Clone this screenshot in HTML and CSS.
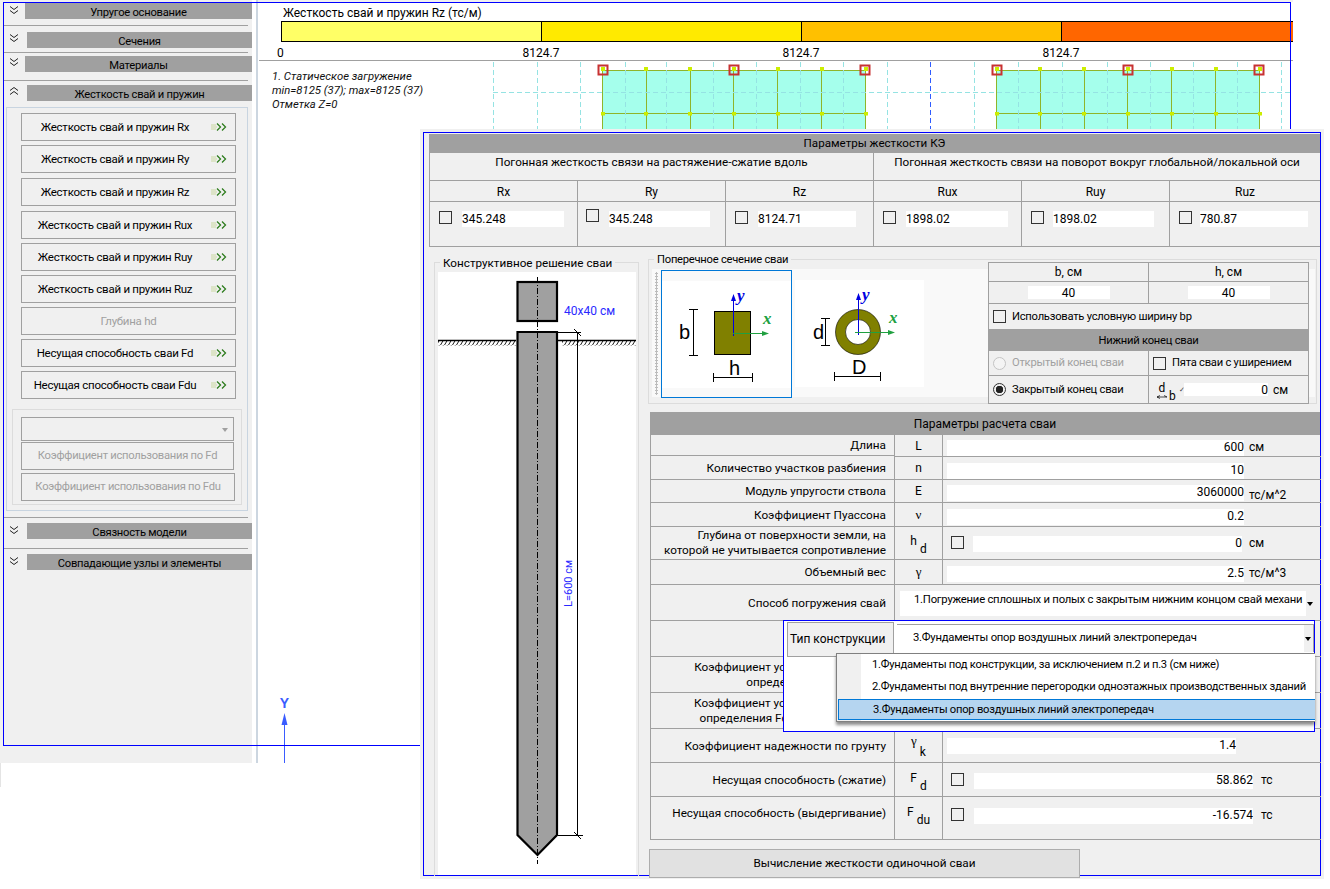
FILE: index.html
```html
<!DOCTYPE html>
<html lang="ru">
<head>
<meta charset="utf-8">
<title>Жесткость свай и пружин</title>
<link rel="stylesheet" href="styles.css">
</head>
<body>
<div class="stage">

  <svg width="0" height="0" class="defs">
    <defs>
      <symbol id="chev-down" viewBox="0 0 10 10"><path d="M1 1.5 5 4.5 9 1.5M1 5.5 5 8.5 9 5.5" fill="none" stroke="#222" stroke-width="1"/></symbol>
      <symbol id="chev-up" viewBox="0 0 10 10"><path d="M1 4.5 5 1.5 9 4.5M1 8.5 5 5.5 9 8.5" fill="none" stroke="#222" stroke-width="1"/></symbol>
      <symbol id="go" viewBox="0 0 17 8"><path d="M0 2H5M0 4H6M0 6H5" stroke="#c9d8a0" stroke-width="1"/><path d="M6 .5 9.5 4 6 7.5M11 .5 14.5 4 11 7.5" fill="none" stroke="#2f7d1f" stroke-width="1.300"/></symbol>
      <pattern id="hatch" width="4" height="5" patternUnits="userSpaceOnUse"><path d="M3.500 0 .5 5" stroke="#000" stroke-width=".9"/></pattern>
      <g id="slab">
        <rect x="602" y="70" width="264" height="70" fill="#a5ffec"/>
        <path d="M602 70.500H866M602 113.500H866M602.500 70V140M646.500 70V140M690.500 70V140M733.500 70V140M777.500 70V140M821.500 70V140M865.500 70V140" fill="none" stroke="#8fb52a" stroke-width="1"/>
        <path d="M601 67h4v4h-4zM644 67h4v4h-4zM688 67h4v4h-4zM732 67h4v4h-4zM776 67h4v4h-4zM820 67h4v4h-4zM864 67h4v4h-4zM601 112h4v3.500h-4zM644 112h4v3.500h-4zM688 112h4v3.500h-4zM732 112h4v3.500h-4zM776 112h4v3.500h-4zM820 112h4v3.500h-4zM864 112h4v3.500h-4z" fill="#ccee00"/>
        <path d="M598.500 65.500h9v9h-9zM729.500 65.500h9v9h-9zM860.500 65.500h9v9h-9z" fill="none" stroke="#c83232" stroke-width="2"/>
      </g>
    </defs>
  </svg>

  <div class="app">
    <aside class="side">
      <div class="sec sec-a s1"><svg class="chev c1"><use href="#chev-down"/></svg><div class="bar">Упругое основание</div></div>
      <div class="rule r1"></div>
      <div class="sec sec-b s2"><svg class="chev c2"><use href="#chev-down"/></svg><div class="bar">Сечения</div></div>
      <div class="rule r2"></div>
      <div class="sec sec-a s3"><svg class="chev c2"><use href="#chev-down"/></svg><div class="bar">Материалы</div></div>
      <div class="rule r3"></div>
      <div class="sec sec-b s4"><svg class="chev c3"><use href="#chev-up"/></svg><div class="bar">Жесткость свай и пружин</div></div>

      <div class="group">
        <div class="btn"><span class="btn-t">Жесткость свай и пружин Rx</span><svg class="go"><use href="#go"/></svg></div>
        <div class="btn"><span class="btn-t">Жесткость свай и пружин Ry</span><svg class="go"><use href="#go"/></svg></div>
        <div class="btn b5"><span class="btn-t">Жесткость свай и пружин Rz</span><svg class="go"><use href="#go"/></svg></div>
        <div class="btn b5"><span class="btn-t">Жесткость свай и пружин Rux</span><svg class="go"><use href="#go"/></svg></div>
        <div class="btn"><span class="btn-t">Жесткость свай и пружин Ruy</span><svg class="go"><use href="#go"/></svg></div>
        <div class="btn"><span class="btn-t">Жесткость свай и пружин Ruz</span><svg class="go"><use href="#go"/></svg></div>
        <div class="btn off"><span class="btn-t">Глубина hd</span></div>
        <div class="btn"><span class="btn-t">Несущая способность сваи Fd</span><svg class="go"><use href="#go"/></svg></div>
        <div class="btn"><span class="btn-t">Несущая способность сваи Fdu</span><svg class="go"><use href="#go"/></svg></div>
        <div class="subgroup">
          <div class="combo-off"><span class="tri tri-off"></span></div>
          <div class="btn off wide1"><span class="plain">Коэффициент использования по Fd</span></div>
          <div class="btn off wide2"><span class="plain">Коэффициент использования по Fdu</span></div>
        </div>
      </div>

      <div class="rule r4"></div>
      <div class="sec sec-b s5"><svg class="chev c4"><use href="#chev-down"/></svg><div class="bar">Связность модели</div></div>
      <div class="rule r5"></div>
      <div class="sec sec-b s5"><svg class="chev c4"><use href="#chev-down"/></svg><div class="bar">Совпадающие узлы и элементы</div></div>
    </aside>

    <div class="gutter"></div>

    <main class="canvas">
      <div class="legend-title">Жесткость свай и пружин Rz (тс/м)</div>
      <div class="legend">
        <div class="seg seg1"></div><div class="seg seg2"></div><div class="seg seg3"></div><div class="seg seg4"></div>
      </div>
      <div class="ticks">
        <div class="tick"><span>0</span></div>
        <div class="tick"><span>8124.7</span></div>
        <div class="tick"><span>8124.7</span></div>
        <div class="tick"><span>8124.7</span></div>
      </div>
      <svg class="drawing" viewBox="258 0 1035 763">
        <use href="#slab"/>
        <use href="#slab" x="394"/>
        <g stroke="#95e3e3" stroke-width="1" stroke-dasharray="5 3" fill="none">
          <path d="M493.500 62V140M537.500 62V140M580.500 62V140M625.500 62V140M666.500 62V140M713.500 62V140M756.500 62V140M800.500 62V140M843.500 62V140M887.500 62V140M974.500 62V140M1018.500 62V140M1062.500 62V140M1107.500 62V140M1150.500 62V140M1193.500 62V140M1237.500 62V140M1281.500 62V140"/>
          <path d="M493 92.500H1293"/>
        </g>
        <path d="M930.500 62V140" stroke="#2f5cff" stroke-width="1" stroke-dasharray="5 3"/>
        <text x="284.500" y="708" class="axis-y">Y</text>
        <path d="M284.500 713 287.500 725H281.500Z" fill="#3a5cff"/>
        <path d="M284.500 724V763" stroke="#3a5cff" stroke-width="1"/>
      </svg>
      <div class="note">1. Статическое загружение<br>min=8125 (37); max=8125 (37)<br>Отметка Z=0</div>
    </main>
  </div>

  <div class="stub"></div>
  <div class="frame"></div>

  <section class="dialog">
    <div class="gray-bar head-top">Параметры жесткости КЭ</div>

    <div class="stiff">
      <div class="st-cell st-title span3">Погонная жесткость связи на растяжение-сжатие вдоль</div>
      <div class="st-cell st-title span3">Погонная жесткость связи на поворот вокруг глобальной/локальной оси</div>
      <div class="st-cell st-head">Rx</div>
      <div class="st-cell st-head">Ry</div>
      <div class="st-cell st-head">Rz</div>
      <div class="st-cell st-head">Rux</div>
      <div class="st-cell st-head">Ruy</div>
      <div class="st-cell st-head">Ruz</div>
      <div class="st-cell st-val"><span class="check"></span><div class="input w102">345.248</div></div>
      <div class="st-cell st-val pl9"><span class="check up2"></span><div class="input w101">345.248</div></div>
      <div class="st-cell st-val"><span class="check"></span><div class="input w98">8124.71</div></div>
      <div class="st-cell st-val"><span class="check"></span><div class="input w102">1898.02</div></div>
      <div class="st-cell st-val"><span class="check"></span><div class="input w101 gap-less">1898.02</div></div>
      <div class="st-cell st-val"><span class="check"></span><div class="input w108 gap-less2">780.87</div></div>
    </div>

    <div class="mid">
      <div class="g-pile">
        <div class="g-title g-title-pile">Конструктивное решение сваи</div>
        <svg class="pile-svg" viewBox="438 272 198 603">
          <rect x="517.500" y="282" width="39.500" height="39" fill="#a0a0a0" stroke="#000" stroke-width="2.200"/>
          <path d="M517.500 332H557V835L537.500 855 517.500 835Z" fill="#a0a0a0" stroke="#000" stroke-width="2.200"/>
          <path d="M537.500 277V864" stroke="#000" stroke-width="1" stroke-dasharray="6 2 1 2"/>
          <path d="M438 340.500H516M558 340.500H636" stroke="#000" stroke-width="1.500"/>
          <rect x="438" y="341" width="78" height="4.500" fill="url(#hatch)"/>
          <rect x="562" y="341" width="74" height="4.500" fill="url(#hatch)"/>
          <text x="564" y="315" class="pile-lab">40x40 см</text>
          <path d="M558 332.500H581M577.500 332V835M558 835.500H583M574 329 581 336M574 832 581 839" fill="none" stroke="#000" stroke-width="1"/>
          <text transform="translate(572 607) rotate(-90)" class="pile-lab small">L=600 см</text>
        </svg>
      </div>

      <div class="mid-right">
        <div class="g-sect">
          <div class="g-title g-title-sect">Поперечное сечение сваи</div>
          <div class="sect-in">
            <div class="grip"></div>
            <div class="item selected">
              <svg class="sec-svg" viewBox="662 281 129 107">
                <rect x="714.500" y="311.500" width="36" height="43" fill="#808000" stroke="#000" stroke-width="1"/>
                <path d="M733.500 336V298" stroke="#0000e0" stroke-width="1"/>
                <path d="M733.500 294 736 301H731Z" fill="#0000e0"/>
                <path d="M733 333.500H764" stroke="#20a040" stroke-width="1"/>
                <path d="M769 333.500 762 331V336Z" fill="#20a040"/>
                <text x="737" y="301" class="ax ax-y">y</text>
                <text x="763" y="324" class="ax ax-x">x</text>
                <path d="M693.500 309V356M689 309.500H698M689 355.500H698M713 377.500H753M713.500 373V382M752.500 373V382" fill="none" stroke="#000" stroke-width="1"/>
                <text x="679" y="339" class="dim-t">b</text>
                <text x="729" y="375" class="dim-t">h</text>
              </svg>
            </div>
            <div class="item">
              <svg class="sec-svg" viewBox="795 281 129 107">
                <circle cx="858" cy="333" r="17.500" fill="#fff" stroke="#808000" stroke-width="10"/>
                <circle cx="858" cy="333" r="22.500" fill="none" stroke="#000" stroke-width=".6"/>
                <circle cx="858" cy="333" r="12.500" fill="none" stroke="#000" stroke-width=".6"/>
                <path d="M858.500 336V298" stroke="#0000e0" stroke-width="1"/>
                <path d="M858.500 294 861 301H856Z" fill="#0000e0"/>
                <path d="M855 333.500H890" stroke="#20a040" stroke-width="1"/>
                <path d="M895 333.500 888 331V336Z" fill="#20a040"/>
                <text x="862" y="301" class="ax ax-y">y</text>
                <text x="889" y="324" class="ax ax-x">x</text>
                <path d="M825.500 319V347M821 319.500H830M821 346.500H830M834 377.500H881M834.500 373V382M880.500 373V382" fill="none" stroke="#000" stroke-width="1"/>
                <text x="813" y="340" class="dim-t">d</text>
                <text x="852" y="375" class="dim-t">D</text>
              </svg>
            </div>
            <div class="bh">
              <div class="bh-c bh-r1">b, см</div>
              <div class="bh-c bh-r1">h, см</div>
              <div class="bh-c bh-r2"><div class="input w82 tc">40</div></div>
              <div class="bh-c bh-r2"><div class="input w82 tc">40</div></div>
              <div class="bh-c bh-r3 span2 start"><span class="check"></span><span class="sm">Использовать условную ширину bp</span></div>
              <div class="gray-bar bh-band span2">Нижний конец сваи</div>
              <div class="bh-c bh-r4 start disabled"><span class="radio radio-off"></span><span class="sm">Открытый конец сваи</span></div>
              <div class="bh-c bh-r4 start"><span class="check"></span><span class="sm">Пята сваи с уширением</span></div>
              <div class="bh-c bh-r5 start"><span class="radio radio-on"></span><span class="sm">Закрытый конец сваи</span></div>
              <div class="bh-c bh-r5 start tight">
                <span class="frac"><span class="frac-top"><span class="frac-d">d</span><svg class="frac-arrow" viewBox="0 0 10 4"><path d="M0 2H10M0 2 3 .5M0 2 3 3.500M10 2 7 .5" fill="none" stroke="#000" stroke-width=".7"/></svg></span><span class="frac-b">b</span></span>
                <span class="tickmark">✓</span>
                <div class="input w84 tr">0</div><span class="unit">см</span>
              </div>
            </div>
          </div>
        </div>

        <div class="gray-bar head-params">Параметры расчета сваи</div>
        <div class="params">
          <div class="p-label h21">Длина</div><div class="p-sym">L</div>
          <div class="p-val pt5"><div class="input w297 tr">600</div><span class="unit">см</span></div>

          <div class="p-label h23">Количество участков разбиения</div><div class="p-sym">n</div>
          <div class="p-val pt6"><div class="input w297 tr">10</div></div>

          <div class="p-label h23">Модуль упругости ствола</div><div class="p-sym">E</div>
          <div class="p-val pt5"><div class="input w297 tr">3060000</div><span class="unit low">тс/м^2</span></div>

          <div class="p-label h24">Коэффициент Пуассона</div><div class="p-sym greek">ν</div>
          <div class="p-val pt6"><div class="input w297 tr">0.2</div></div>

          <div class="p-label h33 lines">Глубина от поверхности земли, на<br>которой не учитывается сопротивление</div><div class="p-sym"><span class="main">h</span><sub>d</sub></div>
          <div class="p-val pt9 hasbox"><span class="check"></span><div class="input w269 tr">0</div><span class="unit">см</span></div>

          <div class="p-label h25">Объемный вес</div><div class="p-sym greek">γ</div>
          <div class="p-val pt6"><div class="input w297 tr">2.5</div><span class="unit">тс/м^3</span></div>

          <div class="p-label h36">Способ погружения свай</div>
          <div class="p-combo span2"><div class="combo">1.Погружение сплошных и полых с закрытым нижним концом свай механи</div><span class="tri"></span></div>

          <div class="p-label h36"></div><div class="p-blank span2"></div>

          <div class="p-label h36 lines">Коэффициент условий работы при<br>определения Fd (сжатие)</div><div class="p-blank span2"></div>

          <div class="p-label h36 lines">Коэффициент условий работы для<br>определения Fdu (выдергивание)</div><div class="p-blank span2"></div>

          <div class="p-label h34">Коэффициент надежности по грунту</div><div class="p-sym"><span class="main main-k greek">γ</span><sub>k</sub></div>
          <div class="p-val pt9"><div class="input w289 tr">1.4</div></div>

          <div class="p-label h34">Несущая способность (сжатие)</div><div class="p-sym"><span class="main">F</span><sub>d</sub></div>
          <div class="p-val pt11 hasbox fd"><span class="check"></span><div class="input w279 tr">58.862</div><span class="unit wide">тс</span></div>

          <div class="p-label h43 top">Несущая способность (выдергивание)</div><div class="p-sym p-sym-up"><span class="main">F</span><sub>du</sub></div>
          <div class="p-val pt12 hasbox fd"><span class="check"></span><div class="input w279 tr">-16.574</div><span class="unit wide">тс</span></div>
        </div>
        <div class="calc">Вычисление жесткости одиночной сваи</div>
      </div>
    </div>

    <div class="popup">
      <div class="pop-row">
        <div class="pop-label">Тип конструкции</div>
        <div class="pop-combo"><div class="pop-white">3.Фундаменты опор воздушных линий электропередач</div><span class="tri"></span></div>
      </div>
      <div class="menu">
        <div class="menu-item">1.Фундаменты под конструкции, за исключением п.2 и п.3 (см ниже)</div>
        <div class="menu-item">2.Фундаменты под внутренние перегородки одноэтажных производственных зданий</div>
        <div class="menu-item active">3.Фундаменты опор воздушных линий электропередач</div>
      </div>
    </div>
  </section>
</div>
</body>
</html>
```
FILE: styles.css
```css
* { box-sizing: border-box; }
html, body { margin: 0; padding: 0; background: #fff; }
body { font-family: Roboto, "Noto Sans", "Liberation Sans", sans-serif; font-size: 12px; line-height: 14px; color: #000; }
.defs { position: absolute; }
.stage { position: relative; width: 1330px; height: 889px; overflow: hidden; background: #fff; }

/* main window */
.app { position: absolute; left: 0; top: 0; width: 1293px; height: 763px; display: flex; }
.side { width: 252px; height: 763px; background: #f0f0f0; padding-top: 2px; flex: none; }
.gutter { width: 6px; flex: none; background: linear-gradient(90deg, #fff 0 4px, #ccd6e0 4px 6px); }
.canvas { position: relative; flex: 1; border-top: 2px solid #f0f0f0; }
.frame { position: absolute; left: 3px; top: 2px; width: 1288px; height: 744px; border: 1px solid #0000ff; pointer-events: none; }
.stub { position: absolute; left: 0; top: 763px; width: 1px; height: 24px; background: #e4e4e4; }

.sec { position: relative; display: flex; }
.sec-a { padding-left: 25px; }
.sec-b { padding-left: 27px; }
.bar { flex: 1; background: #a0a0a0; text-align: center; height: 16px; line-height: 20px; font-size: 11.200px; letter-spacing: -.25px; }
.s1 .bar { height: 17px; line-height: 21px; }
.s2 { margin-top: 6px; }
.s3 { margin-top: 3px; }
.s4 { margin-top: 4px; }
.s5 { margin-top: 5px; }
.chev { position: absolute; left: 9px; width: 10px; height: 10px; }
.c1 { top: 3px; }
.c2 { top: 1px; }
.c3 { top: 1px; }
.c4 { top: 2px; }
.rule { height: 1px; background: #a0a0a0; margin-left: 4px; width: 244px; }
.r1 { margin-top: 6px; }
.r2 { margin-top: 4px; }
.r3 { margin-top: 8px; }
.r4 { margin-top: 6px; }
.r5 { margin-top: 9px; }

.group { margin: 6px 0 0 6px; width: 242px; height: 404px; border: 1px solid #c8d4e0; padding: 5px 0 0 14px; }
.btn { position: relative; width: 215px; height: 28px; margin-bottom: 4px; border: 1px solid #a0a0a0; background: #f0f0f0; display: flex; align-items: center; justify-content: center; padding: 0 27px 0 0; font-size: 11.500px; letter-spacing: -.26px; }
.b5 { margin-top: 5px; }
.btn-t { white-space: nowrap; }
.go { position: absolute; right: 7px; top: 9px; width: 17px; height: 8px; }
.off { color: #a0a0a0; padding-right: 0; }
.subgroup { margin: 10px 0 0 -9px; width: 230px; height: 96px; border: 1px solid #dcdcdc; padding: 7px 0 0 8px; }
.combo-off { position: relative; width: 213px; height: 24px; border: 1px solid #a0a0a0; margin-bottom: 1px; }
.wide1 { width: 213px; padding: 0; margin-bottom: 3px; font-size: 11.200px; letter-spacing: -.27px; }
.wide2 { width: 214px; padding: 0; margin-bottom: 0; font-size: 11.200px; letter-spacing: -.27px; }
.plain { white-space: nowrap; }
.tri { display: block; width: 0; height: 0; border-left: 3px solid transparent; border-right: 3px solid transparent; border-top: 4px solid #000; }
.tri-off { position: absolute; right: 5px; top: 10px; border-top-color: #a0a0a0; }

/* canvas contents */
.legend-title { margin: 4px 0 0 25px; height: 15px; line-height: 15px; }
.legend { display: flex; margin-left: 23px; width: 1012px; height: 21px; border: 1px solid #000; border-right: 0; margin-top: 0; }
.seg { width: 260px; flex: none; border-right: 1px solid #000; }
.seg1 { background: #ffff66; }
.seg2 { background: #ffea00; }
.seg3 { background: #ffc000; }
.seg4 { background: #ff6600; border-right: 0; flex: 1; }
.ticks { display: flex; margin-left: 1px; padding: 4px 0 0 22px; height: 19px; width: 1034px; border-bottom: 1px solid #a0a0a0; overflow: hidden; }
.tick { width: 260px; flex: none; }
.tick span { display: inline-block; transform: translateX(-50%); white-space: nowrap; }
.tick:first-child span { transform: translateX(-4px); }
.drawing { position: absolute; left: 0; top: -2px; width: 1035px; height: 763px; }
.axis-y { font: bold 14px "Liberation Sans", sans-serif; fill: #3a5cff; text-anchor: middle; }
.note { position: relative; margin: 9px 0 0 14px; font-size: 11.300px; font-style: italic; line-height: 14px; color: #111; }

/* dialog */
.dialog { position: absolute; left: 423px; top: 132px; width: 898px; height: 744px; border: 1px solid #0000ff; background: #f0f0f0; box-shadow: 0 0 0 3px #f0f0f0; padding: 1px 0 0 5px; }
.gray-bar { background: #a0a0a0; text-align: center; }
.head-top { height: 19px; line-height: 19px; font-size: 11.600px; }

.stiff { display: grid; grid-template-columns: repeat(5, 148px) 151px; grid-template-rows: 28px 21px 45px; }
.st-cell { border-left: 1px solid #a0a0a0; border-bottom: 1px solid #a0a0a0; }
.span3 { grid-column: span 3; }
.span2 { grid-column: span 2; }
.st-title { text-align: center; padding-top: 2px; font-size: 11.700px; }
.st-head { text-align: center; line-height: 23px; }
.st-val { display: flex; align-items: flex-start; padding: 9px 0 0 9px; gap: 10px; }
.st-val .input { line-height: 16px; }
.pl9 { padding-left: 8px; }

.check { display: block; flex: none; width: 13px; height: 13px; border: 1px solid #333; }
.up2 { margin-top: -2px; }
.input { background: #fff; height: 16px; line-height: 15px; flex: none; white-space: nowrap; overflow: hidden; }
.tc { text-align: center; }
.tr { text-align: right; }
.w102 { width: 102px; }
.w101 { width: 101px; }
.w98 { width: 98px; }
.w108 { width: 108px; }
.w82 { width: 82px; height: 13px; line-height: 14px; }
.w84 { width: 84px; height: 13px; line-height: 14px; }
.w297 { width: 297px; }
.w289 { width: 289px; }
.w279 { width: 279px; }
.w269 { width: 269px; }
.gap-less { margin-left: -1px; }
.gap-less2 { margin-left: -2px; }

.mid { display: flex; align-items: flex-start; }
.g-pile { position: relative; margin: 15px 0 0 5px; width: 205px; height: 614px; border: 1px solid #dcdcdc; border-bottom: 0; padding: 9px 0 0 3px; flex: none; }
.g-title { position: absolute; top: -7px; background: #f0f0f0; padding: 0 3px; white-space: nowrap; }
.g-title-pile { left: 5px; font-size: 11.700px; }
.g-title-sect { left: 5px; font-size: 11.200px; letter-spacing: -.24px; }
.pile-svg { display: block; width: 198px; height: 603px; background: #fff; }
.pile-lab { font: 12px Roboto, sans-serif; fill: #2a2aff; }
.small { font-size: 11px; }

.mid-right { margin-left: 9px; width: 672px; flex: none; }
.g-sect { position: relative; margin-top: 12px; width: 669px; height: 145px; border: 1px solid #dcdcdc; padding: 9px 0 0 3px; }
.sect-in { display: flex; align-items: flex-start; width: 663px; height: 128px; background: #f9f9f9; }
.grip { width: 9px; flex: none; margin-top: 3px; height: 123px; background: radial-gradient(circle, #bbb 1px, transparent 1.100px) 3px 0 / 3px 3px repeat-y; }
.item { width: 131px; height: 128px; flex: none; padding: 11px 0 0; margin-right: 3px; }
.selected { border: 1px solid #0078d7; padding: 10px 0 0 0; width: 131px; margin-top: 1px; height: 128px; }
.sec-svg { display: block; width: 129px; height: 107px; background: #fff; }
.ax { font-family: "Liberation Serif", serif; font-style: italic; font-weight: bold; font-size: 17px; }
.ax-y { fill: #0000e0; }
.ax-x { fill: #20a040; }
.dim-t { font: 20px "Liberation Sans", sans-serif; fill: #000; }

.bh { margin: -7px 0 0 59px; width: 321px; display: grid; grid-template-columns: 160px 160px; grid-template-rows: 19px 22px 26px 21px 25px 28px; border-top: 1px solid #a0a0a0; border-left: 1px solid #a0a0a0; flex: none; background: #f0f0f0; }
.bh-c { border-right: 1px solid #a0a0a0; border-bottom: 1px solid #a0a0a0; display: flex; align-items: center; justify-content: center; white-space: nowrap; }
.start { justify-content: flex-start; padding-left: 4px; gap: 6px; }
.sm { font-size: 11.200px; letter-spacing: -.24px; }
.disabled { color: #a0a0a0; }
.bh-band { line-height: 21px; border-right: 1px solid #a0a0a0; font-size: 11.200px; letter-spacing: -.24px; }
.radio { display: block; width: 13px; height: 13px; border-radius: 50%; border: 1px solid #333; flex: none; }
.radio-off { border-color: #c4c4c4; background: #f4f4f4; }
.radio-on { background: radial-gradient(circle, #222 0 3.500px, transparent 4px); }
.tight { gap: 0; padding-left: 8px; }
.frac { display: flex; align-items: flex-end; width: 22px; flex: none; font-size: 12px; line-height: 9px; margin-top: 4px; }
.frac-top { display: flex; flex-direction: column; align-items: center; width: 10px; }
.frac-arrow { display: block; width: 10px; height: 4px; margin-top: 2px; }
.frac-b { margin-left: 2px; margin-bottom: -2px; }
.tickmark { font-size: 7px; width: 5px; flex: none; color: #444; }
.unit { margin-left: 5px; white-space: nowrap; }
.unit.low { padding-top: 3px; }
.unit.wide { margin-left: 8px; }

.head-params { margin: 8px 0 0 2px; width: 670px; height: 23px; line-height: 24px; }
.params { margin-left: 2px; width: 670px; display: grid; grid-template-columns: 243px 48px 379px; border-left: 1px solid #a0a0a0; }
.p-label { display: flex; align-items: center; justify-content: flex-end; padding-right: 8px; border-bottom: 1px solid #a0a0a0; white-space: nowrap; text-align: right; font-size: 11.750px; }
.lines { line-height: 15px; }
.top { align-items: flex-start; padding-top: 9px; }
.h21 { height: 21px; } .h23 { height: 23px; } .h24 { height: 24px; } .h25 { height: 25px; }
.h33 { height: 33px; } .h34 { height: 34px; } .h36 { height: 36px; } .h43 { height: 43px; }
.p-sym { display: flex; align-items: center; justify-content: center; border-left: 1px solid #a0a0a0; border-bottom: 1px solid #a0a0a0; }
.p-sym-up { padding-bottom: 9px; }
.p-sym sub { font-size: 12px; line-height: 12px; position: relative; top: 6px; margin-left: 3px; }
.main { position: relative; top: -2px; }
.main-k { top: -5px; }
.greek { font-family: "Liberation Serif", serif; font-size: 13px; }
.p-val { display: flex; align-items: flex-start; padding-left: 4px; border-left: 1px solid #a0a0a0; border-bottom: 1px solid #a0a0a0; }
.pt5 { padding-top: 5px; } .pt6 { padding-top: 6px; } .pt9 { padding-top: 9px; } .pt11 { padding-top: 10px; } .pt12 { padding-top: 11px; }
.hasbox { padding-left: 8px; gap: 9px; }
.hasbox .unit { margin-left: -2px; }
.fd { gap: 10px; }
.fd .unit.wide { margin-left: -2px; }
.p-combo { display: flex; align-items: flex-start; padding: 6px 0 0 5px; border-left: 1px solid #a0a0a0; border-bottom: 1px solid #a0a0a0; position: relative; }
.combo { background: #fff; width: 406px; height: 25px; padding: 2px 0 0 14px; white-space: nowrap; font-size: 11.300px; letter-spacing: -.24px; }
.p-combo .tri { margin: 11px 0 0 1px; }
.p-blank { border-left: 1px solid #a0a0a0; border-bottom: 1px solid #a0a0a0; }
.calc { margin: 9px 0 0 1px; width: 431px; height: 29px; background: #e1e1e1; border: 1px solid #adadad; text-align: center; line-height: 27px; font-size: 11.750px; }

/* dropdown */
.popup { position: absolute; left: 359px; top: 487px; width: 532px; height: 112px; background: #fff; border: 1px solid #0000ff; padding: 1px 0 0 3px; }
.pop-row { display: flex; align-items: flex-start; }
.pop-label { width: 107px; height: 35px; background: #f0f0f0; border: 1px solid #a0a0a0; padding-left: 2px; line-height: 32px; flex: none; white-space: nowrap; }
.pop-combo { display: flex; margin: 2px 0 0 3px; width: 418px; height: 28px; background: #f0f0f0; border-top: 1px solid #a0a0a0; border-right: 1px solid #a0a0a0; }
.pop-white { width: 407px; background: #fff; padding: 6px 0 0 16px; white-space: nowrap; height: 27px; font-size: 11.300px; letter-spacing: -.24px; }
.pop-combo .tri { margin: 12px 0 0 1px; }
.menu { position: absolute; left: 52px; top: 32px; width: 479px; height: 69px; background: linear-gradient(90deg, #f0f0f0 0 24px, #fff 24px); border: 1px solid #808080; border-right: 0; padding-top: 1px; box-shadow: 0 3px 3px rgba(0,0,0,.45); font-size: 11.200px; letter-spacing: -.24px; }
.menu-item { height: 22px; line-height: 20px; padding-left: 35px; white-space: nowrap; }
.active { height: 21px; margin: 0 0 0 1px; padding-left: 34px; background: #b5d5f0; border: 1px solid #0078d7; line-height: 19px; border-right: 0; }
```
